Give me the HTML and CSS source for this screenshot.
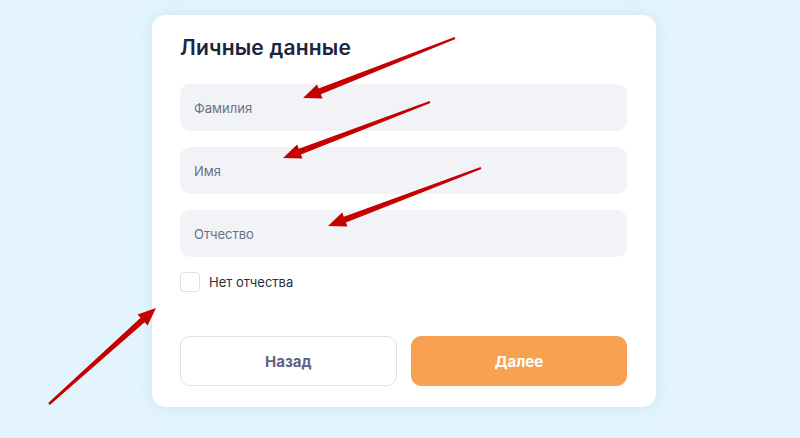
FILE: index.html
```html
<!DOCTYPE html>
<html lang="ru">
<head>
<meta charset="utf-8">
<title>Личные данные</title>
<link rel="stylesheet" href="styles.css">
</head>
<body>
<main class="card">
  <h1 class="title">Личные данные</h1>
  <div class="fields">
    <div class="field">Фамилия</div>
    <div class="field">Имя</div>
    <div class="field">Отчество</div>
  </div>
  <label class="check">
    <span class="box"></span>
    <span class="check-label">Нет отчества</span>
  </label>
  <div class="actions">
    <button class="btn btn-back">Назад</button>
    <button class="btn btn-next">Далее</button>
  </div>
</main>
<svg class="arrows" width="800" height="438" viewBox="0 0 800 438" xmlns="http://www.w3.org/2000/svg">
  <g fill="#c40000">
    <polygon points="303,98 322.5,98.4 320.8,94.2 455.4,39.1 454.6,36.9 318.6,88.6 317.0,84.4"/>
    <polygon points="283,158 302.5,158.6 300.9,154.4 430.4,103.1 429.6,100.9 298.8,148.8 297.2,144.6"/>
    <polygon points="328,226 347.5,226.6 345.9,222.4 481.4,169.1 480.6,166.9 343.8,216.8 342.2,212.6"/>
    <polygon points="156,308 147.6,325.6 144.6,322.3 49.8,404.9 48.2,403.1 140.6,317.8 137.6,314.4"/>
  </g>
</svg>
</body>
</html>
```

FILE: styles.css
```css
* { box-sizing: border-box; }
html, body { margin: 0; padding: 0; }
body {
  width: 800px;
  height: 438px;
  overflow: hidden;
  background: #e3f4fc;
  font-family: "Inter", "Roboto", "Liberation Sans", sans-serif;
  position: relative;
}
.card {
  margin: 15px 0 0 152px;
  width: 504px;
  height: 392px;
  background: #ffffff;
  border-radius: 14px;
  box-shadow: 0 0 18px rgba(120, 170, 200, 0.18);
  padding: 21px 29px 21px 28px;
  display: flex;
  flex-direction: column;
}
.title {
  margin: 0;
  font-size: 21px;
  line-height: 24px;
  font-weight: 600;
  color: #1c2640;
  letter-spacing: 0.2px;
}
.fields {
  margin-top: 24px;
  display: flex;
  flex-direction: column;
  gap: 16px;
}
.field {
  height: 47px;
  background: #f1f3f7;
  border-radius: 10px;
  padding-left: 14px;
  display: flex;
  align-items: center;
  font-size: 13px;
  color: #6c7184;
}
.check {
  margin-top: 15px;
  display: flex;
  align-items: center;
  gap: 9px;
}
.box {
  width: 20px;
  height: 20px;
  border: 1px solid #dcdfe6;
  border-radius: 4px;
  background: #fff;
}
.check-label {
  font-size: 13px;
  color: #2c303b;
}
.actions {
  margin-top: 44px;
  display: grid;
  grid-template-columns: 1fr 1fr;
  gap: 14px;
}
.btn {
  height: 50px;
  border-radius: 10px;
  font-family: inherit;
  font-size: 15px;
  font-weight: 700;
  cursor: pointer;
}
.btn-back {
  background: #fff;
  border: 1px solid #dde0e8;
  color: #5d6283;
}
.btn-next {
  background: #f8a150;
  border: 1px solid #f8a150;
  color: #fff;
}
.arrows {
  position: absolute;
  left: 0;
  top: 0;
  pointer-events: none;
}
```
